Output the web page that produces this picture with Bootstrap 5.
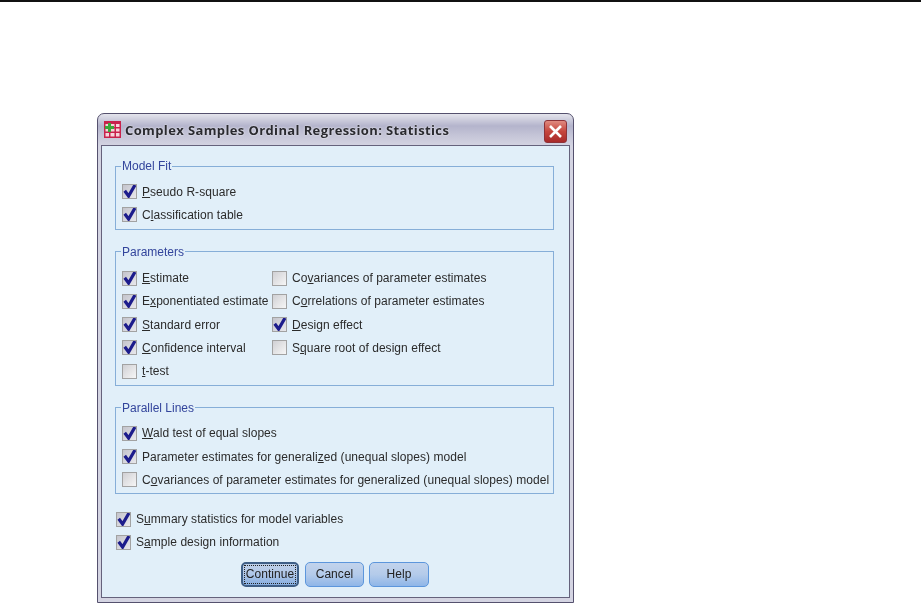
<!DOCTYPE html>
<html lang="en"><head><meta charset="utf-8"><title>Statistics</title>
<link href="https://cdn.jsdelivr.net/npm/bootstrap@5.3.0/dist/css/bootstrap.min.css" rel="stylesheet">
<style>
html,body{height:603px;overflow:hidden;background:#fff}
body{font-family:"Liberation Sans",Arial,sans-serif;font-size:12px;letter-spacing:.05px;color:#2b2b2b;line-height:14px}
.toprule{height:2px;background:#111}
.dlg{width:477px;height:490px;margin:111px 0 0 97px;border:1px solid #55516e;border-radius:7px 7px 0 0;background:linear-gradient(#e4e4ec 0,#b4b4cc 12px,#c6c6d8 22px,#d4d4e2 32px);padding:0 3px 4px;filter:blur(.35px)}
.ttl{height:31px;padding-left:3px}
.ttl-text{font-family:"Open Sans","Liberation Sans",sans-serif;font-weight:700;font-size:13px;letter-spacing:.38px;color:#2a2a30;margin-left:4px;white-space:nowrap;text-shadow:0 0 2px #fff}
.xbtn{width:23px;height:23px;margin-right:3px;margin-top:4px;border-radius:3px;background:linear-gradient(#e08a80,#c5453c 50%,#a82a2a);border:1px solid #8d3238}
.panel{height:453px;background:#e1eff9;border:1px solid #65627c;padding:13px 15px 0 13px}
.grp{border:1px solid #86aed8;padding:0 6px 2px;margin:0 0 15px;min-height:0}
.grp.lastgrp{padding-bottom:1px;margin-bottom:14px}
.grp legend{float:none;width:auto;font-size:12px;line-height:14px;letter-spacing:0;margin:0 0 0 -1px;padding:0 1px;color:#33459c}
.gap7{height:7px}
.gap8{height:8px}
.rw{height:23.25px;display:flex;align-items:center;white-space:nowrap}
.form-check-input.cbx{appearance:none;width:15px;height:15px;flex:none;margin:0 5px 0 0;border:1px solid #a2a2a2;border-radius:0;background:linear-gradient(135deg,#d0d0d4,#f6f6f6);box-shadow:none}
.form-check-input.cbx:checked{background:url("data:image/svg+xml,%3Csvg xmlns='http://www.w3.org/2000/svg' viewBox='0 0 15 15'%3E%3Cpath d='M2.7 6.7 6.6 12 13 1' fill='none' stroke='%231c1c8c' stroke-width='3.2'/%3E%3C/svg%3E") center/15px 15px no-repeat,linear-gradient(135deg,#c4c4cc,#e8e8ec)}
.cols{display:grid;grid-template-columns:150px 1fr}
.lead-rows{padding-left:1px;margin-top:1px}
.btns{margin-top:8px;padding-left:126px;gap:5px}
.wbtn{width:60px;height:25px;padding:0;font-size:12px;letter-spacing:.05px;line-height:23px;color:#222;border:1px solid #5c96dc;border-radius:5px;background:linear-gradient(#c2d3ec,#b4cbea 50%,#8fb6e8)}
.wbtn.mid{width:59px}
.wbtn.on{width:58px;margin-right:1px;border:2px solid #3f5f86;line-height:21px;background:linear-gradient(#bfd0e8,#aec6e8 50%,#86aee0)}
.wbtn.on span{display:block;margin:1px;height:19px;line-height:17px;border:1px dotted #222}
u{text-underline-offset:1px}
</style></head><body>
<div class="toprule"></div>
<div class="dlg">
 <div class="ttl d-flex align-items-center">
  <svg width="17" height="17" viewBox="0 0 17 17" aria-hidden="true"><rect width="17" height="17" fill="#c8224c"/><g fill="#f6d5dc"><rect x="1.5" y="3" width="3.5" height="3"/><rect x="6.5" y="3" width="4" height="3"/><rect x="12" y="3" width="3.5" height="3"/><rect x="1.5" y="7.5" width="3.5" height="3"/><rect x="6.5" y="7.5" width="4" height="3"/><rect x="12" y="7.5" width="3.5" height="3"/><rect x="1.5" y="12" width="3.5" height="3.5"/><rect x="6.5" y="12" width="4" height="3.5"/><rect x="12" y="12" width="3.5" height="3.5"/></g><path d="M4 2h3v3h3v3H7v3H4V8H1V5h3z" fill="#3aa83a"/></svg>
  <span class="ttl-text">Complex Samples Ordinal Regression: Statistics</span>
  <div class="xbtn ms-auto d-flex align-items-center justify-content-center"><svg width="15" height="13" viewBox="0 0 15 13" aria-hidden="true"><path d="M2 1l11 11M13 1 2 12" stroke="#fff" stroke-width="2.6" fill="none"/></svg></div>
 </div>
 <div class="panel">
  <fieldset class="grp"><legend>Model Fit</legend>
   <div class="gap7"></div>
   <label class="rw"><input class="form-check-input cbx" type="checkbox" checked><span><u>P</u>seudo R-square</span></label>
   <label class="rw"><input class="form-check-input cbx" type="checkbox" checked><span>C<u>l</u>assification table</span></label>
  </fieldset>
  <fieldset class="grp"><legend>Parameters</legend>
   <div class="gap8"></div>
   <div class="cols">
    <div>
     <label class="rw"><input class="form-check-input cbx" type="checkbox" checked><span><u>E</u>stimate</span></label>
     <label class="rw"><input class="form-check-input cbx" type="checkbox" checked><span>E<u>x</u>ponentiated estimate</span></label>
     <label class="rw"><input class="form-check-input cbx" type="checkbox" checked><span><u>S</u>tandard error</span></label>
     <label class="rw"><input class="form-check-input cbx" type="checkbox" checked><span><u>C</u>onfidence interval</span></label>
     <label class="rw"><input class="form-check-input cbx" type="checkbox"><span><u>t</u>-test</span></label>
    </div>
    <div>
     <label class="rw"><input class="form-check-input cbx" type="checkbox"><span>Co<u>v</u>ariances of parameter estimates</span></label>
     <label class="rw"><input class="form-check-input cbx" type="checkbox"><span>C<u>o</u>rrelations of parameter estimates</span></label>
     <label class="rw"><input class="form-check-input cbx" type="checkbox" checked><span><u>D</u>esign effect</span></label>
     <label class="rw"><input class="form-check-input cbx" type="checkbox"><span>S<u>q</u>uare root of design effect</span></label>
    </div>
   </div>
  </fieldset>
  <fieldset class="grp lastgrp"><legend>Parallel Lines</legend>
   <div class="gap7"></div>
   <label class="rw"><input class="form-check-input cbx" type="checkbox" checked><span><u>W</u>ald test of equal slopes</span></label>
   <label class="rw"><input class="form-check-input cbx" type="checkbox" checked><span>Parameter estimates for generali<u>z</u>ed (unequal slopes) model</span></label>
   <label class="rw"><input class="form-check-input cbx" type="checkbox"><span>C<u>o</u>variances of parameter estimates for generalized (unequal slopes) model</span></label>
  </fieldset>
  <div class="lead-rows">
   <label class="rw"><input class="form-check-input cbx" type="checkbox" checked><span>S<u>u</u>mmary statistics for model variables</span></label>
   <label class="rw"><input class="form-check-input cbx" type="checkbox" checked><span>S<u>a</u>mple design information</span></label>
  </div>
  <div class="btns d-flex">
   <button type="button" class="btn wbtn on"><span>Continue</span></button>
   <button type="button" class="btn wbtn mid">Cancel</button>
   <button type="button" class="btn wbtn">Help</button>
  </div>
 </div>
</div>
</body></html>
